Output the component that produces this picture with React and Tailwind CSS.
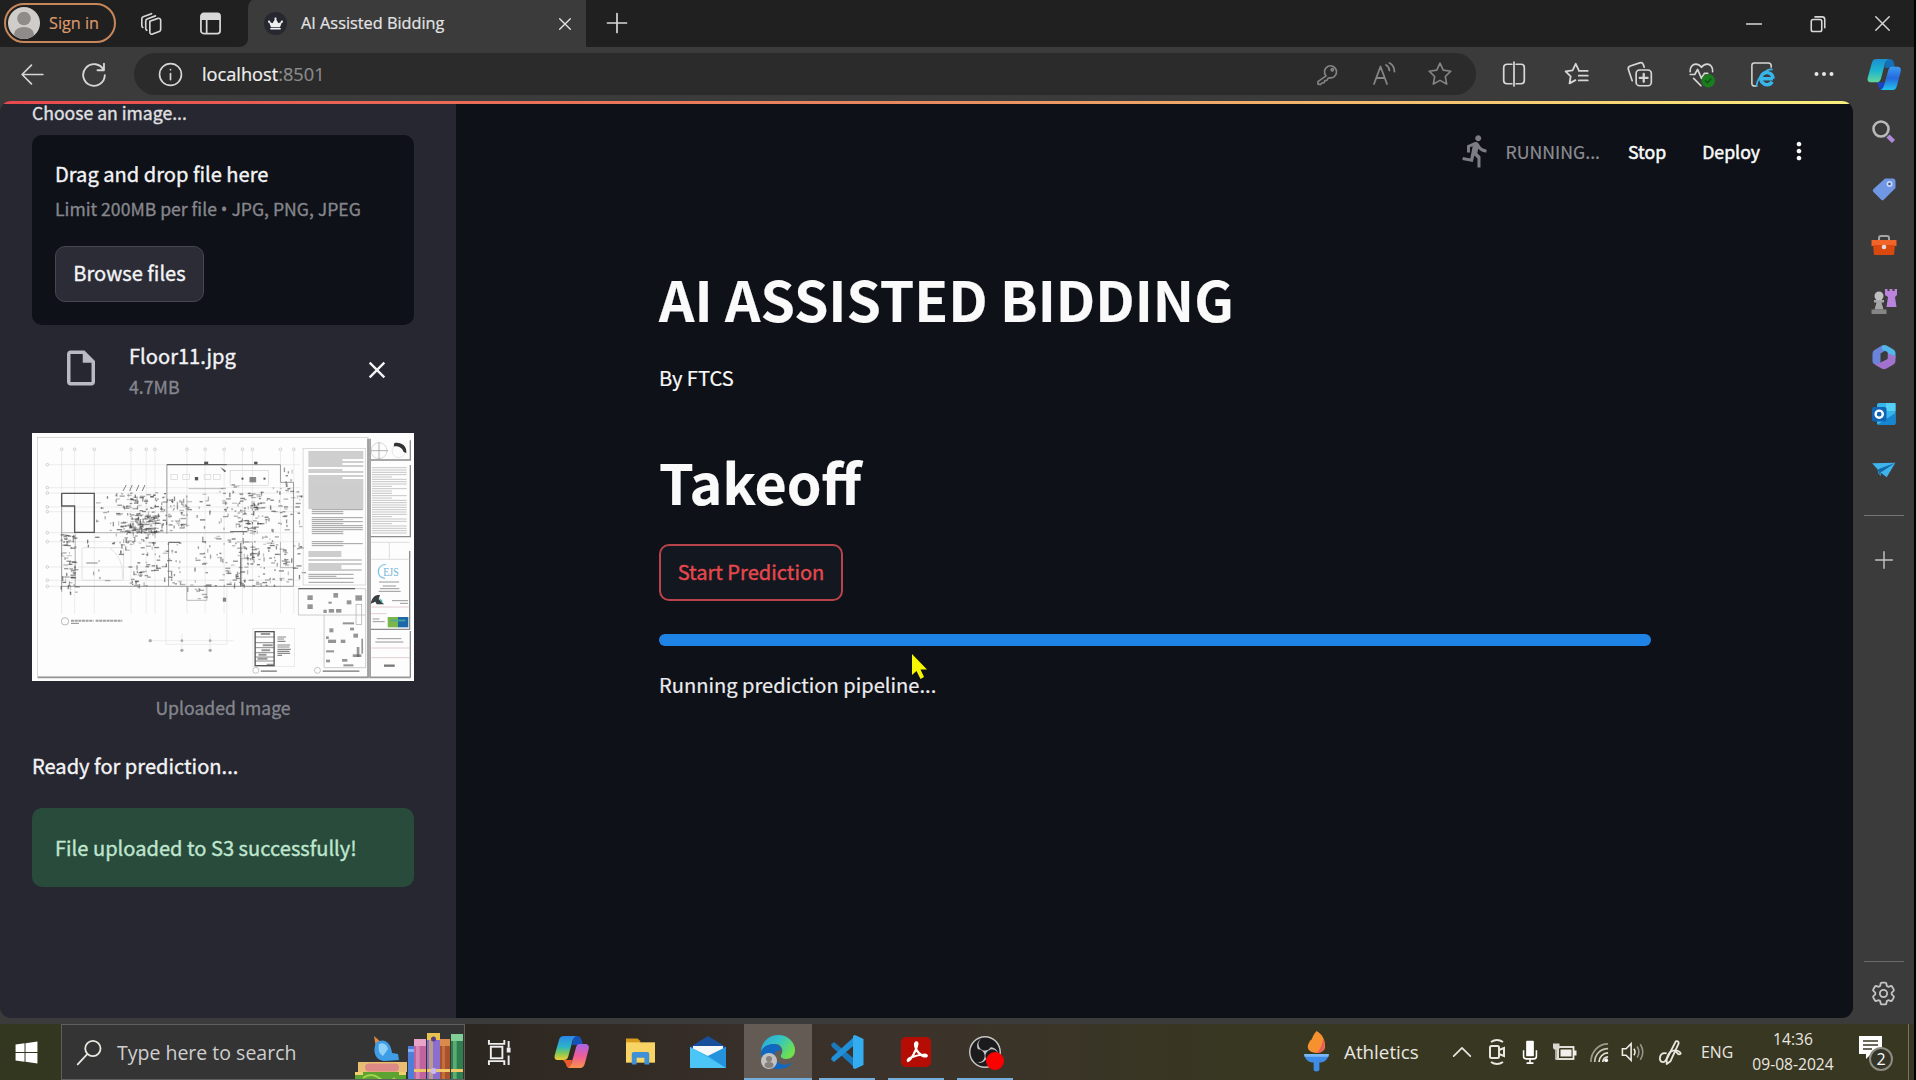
import React from 'react';
import { MdDirectionsRun, MdOutlineInsertDriveFile, MdClose, MdMoreVert } from 'react-icons/md';
import { HiOutlineCog6Tooth } from 'react-icons/hi2';
import { FaWindows, FaCrown } from 'react-icons/fa';
import { SiObsstudio } from 'react-icons/si';

const SANS = "font-['Noto_Sans_CJK_SC','Open_Sans',sans-serif]";
const UI = "font-['Open_Sans','Noto_Sans',sans-serif]";

function Slot({ className = '', children }) {
  return <div className={`flex shrink-0 items-center justify-center ${className}`}>{children}</div>;
}

function Line({ size = 24, w = 1.6, className = '', children }) {
  return (
    <svg
      width={size}
      height={size}
      viewBox="0 0 24 24"
      fill="none"
      stroke="currentColor"
      strokeWidth={w}
      strokeLinecap="round"
      strokeLinejoin="round"
      className={`shrink-0 ${className}`}
    >
      {children}
    </svg>
  );
}

function TitleBar() {
  return (
    <div className="flex h-[47px] shrink-0 items-center bg-[#202020] text-[#d8d8d8]">
      <div className="ml-1 -mt-0.5 flex h-10 w-28 shrink-0 items-center rounded-full border-2 border-[#c8875a] pl-[2px] text-[#dc9a6c]">
        <svg width="32" height="32" viewBox="0 0 32 32">
          <clipPath id="avatar"><circle cx="16" cy="16" r="16" /></clipPath>
          <g clipPath="url(#avatar)">
            <rect width="32" height="32" fill="#cfccc9" />
            <circle cx="16" cy="11.5" r="6.8" fill="#8f8b88" />
            <ellipse cx="16" cy="27" rx="10" ry="7" fill="#8f8b88" />
          </g>
        </svg>
        <span className="ml-[9px] text-[16.2px] leading-6 whitespace-nowrap [-webkit-text-stroke:0.2px]">Sign in</span>
      </div>
      <Slot className="w-[72px]">
        <Line size={26} w={1.5}>
          <path d="M10 9.5 17.5 6.8a1.8 1.8 0 0 1 2.5 1.7v8.6a2 2 0 0 1-1.3 1.9l-6.2 2.3a1.8 1.8 0 0 1-2.5-1.7z" />
          <path d="M7.2 17.8a1.8 1.8 0 0 1-1-1.6V9.2a2 2 0 0 1 1.3-1.9l7.7-2.8" />
          <path d="M3.6 15.2a1.8 1.8 0 0 1-1-1.6V7.2a2 2 0 0 1 1.3-1.9L11.600 2.500" />
        </Line>
      </Slot>
      <Slot className="ml-[-2px] w-[48px]">
        <Line size={23} w={1.8}>
          <rect x="2" y="1.500" width="20" height="21" rx="3" />
          <path d="M3 3h18v4.500H3z" fill="currentColor" />
          <path d="M8 8v14" />
        </Line>
      </Slot>
      <svg width="14" height="47" viewBox="0 0 14 47" className="ml-[4px] shrink-0">
        <path d="M14 0v47H0c6 0 10-3 10-9V9c0-4 1-7 4-9z" fill="#3b3b3b" />
      </svg>
      <div className="flex h-[47px] w-[334px] shrink-0 items-center bg-[#3b3b3b] text-[#e4e4e4]">
        <div className="ml-[12px] flex h-[23px] w-[23px] items-center justify-center rounded-full bg-[#26272f]">
          <FaCrown size={15} color="#f0f0f0" />
        </div>
        <span className="-mt-[2px] ml-[14px] w-[240px] text-[16.3px] leading-6 whitespace-nowrap [-webkit-text-stroke:0.2px]">AI Assisted Bidding</span>
        <Line size={16} w={2} className="ml-[16px]"><path d="M4 4l16 16M20 4L4 20" /></Line>
      </div>
      <svg width="13" height="47" viewBox="0 0 13 47" className="shrink-0 ml-[-10px]">
        <path d="M0 0v47h13c-6 0-9-3-9-9V9C4 5 3 2 0 0z" fill="#3b3b3b" />
      </svg>
      <Slot className="ml-[4px] w-[48px] pb-[1px]">
        <Line size={24} w={1.7}><path d="M12 2.500v19M2.500 12h19" /></Line>
      </Slot>
      <div className="ml-auto flex shrink-0">
        <Slot className="w-16"><Line size={18} w={1.7}><path d="M2 12h20" /></Line></Slot>
        <Slot className="w-16">
          <Line size={18} w={2.100}>
            <rect x="3" y="6" width="14" height="16" rx="2.500" />
            <path d="M8 2.500h9.500c2 0 3.500 1.500 3.500 3.500v11" />
          </Line>
        </Slot>
        <Slot className="w-16"><Line size={17} w={2}><path d="M2.500 2.500l19 19M21.500 2.500l-19 19" /></Line></Slot>
      </div>
    </div>
  );
}

function CopilotBlue() {
  return (
    <svg width="35" height="33" viewBox="0 0 36 34">
      <defs>
        <linearGradient id="cb1" x1="0" y1="0" x2="0" y2="1"><stop offset="0" stopColor="#1b8fd0" /><stop offset=".5" stopColor="#1cb5cf" /><stop offset="1" stopColor="#62d69a" /></linearGradient>
        <linearGradient id="cb2" x1="0" y1="0" x2="0" y2="1"><stop offset="0" stopColor="#3b9bf0" /><stop offset=".5" stopColor="#2569e0" /><stop offset="1" stopColor="#22c3ee" /></linearGradient>
      </defs>
      <path d="M20 1h3c3 0 4 2 5 5l1 4H18z" fill="#1470b8" />
      <path d="M10 25h8l-1 8h-1c-3 0-4-2-4-4z" fill="#1c43c4" />
      <path d="M10 1h12c-2 1-3 3-3.600 5l-4 15c-1 3-2 4-5 4H4c-3 0-4-2-3.200-5L5 5c1-3 2-4 5-4z" fill="url(#cb1)" />
      <path d="M26 9h5c3 0 4.500 2 3.700 5L31 28c-1 3.500-2 5-5 5H14c2-1 3-3 3.600-5l4-14c1-4 2-5 4.400-5z" fill="url(#cb2)" />
    </svg>
  );
}

function ToolBar() {
  return (
    <div className="flex h-[54px] shrink-0 items-center bg-[#3b3b3b] text-[#d6d6d6]">
      <Slot className="w-16"><Line size={25} w={1.6}><path d="M22 12H2M11 3l-9 9 9 9" /></Line></Slot>
      <Slot className="w-[60px]">
        <Line size={26} w={1.7}><path d="M21 8.500A10 10 0 1 0 22 13M21.200 2.500v6h-6" /></Line>
      </Slot>
      <div className="ml-[10px] flex h-[42px] w-[1342px] shrink-0 items-center rounded-full bg-[#2b2b2b]">
        <Slot className="ml-[12px] w-12">
          <Line size={25} w={1.6}><circle cx="12" cy="12" r="10.500" /><path d="M12 11v6M12 7.300v.2" /></Line>
        </Slot>
        <span className="-mt-[1px] ml-[8px] text-[18.2px] leading-6 text-[#f0f0f0] [-webkit-text-stroke:0.2px]">localhost<span className="text-[#8b8b8b]">:8501</span></span>
        <div className="ml-auto mr-[8px] flex text-[#858585]">
          <Slot className="w-[57px]">
            <Line size={23} w={1.700}>
              <path d="M10.500 13.500A6.300 6.300 0 1 1 14.500 15.500L12.500 16l-1 2-2.200.4-.8 2.100-2.300.4L4.500 22.500l-2.500-.5V19.500z" />
              <circle cx="17" cy="7" r="1.200" />
            </Line>
          </Slot>
          <Slot className="w-[56px]">
            <Line size={24} w={1.800}>
              <path d="M2 22 8.500 4.500 15 22M4.200 16h8.600M14 3c2 1 3.200 3 3.400 5.500M17.500 1c3 1.600 4.800 4.500 5 8.500" />
            </Line>
          </Slot>
          <Slot className="w-[56px]">
            <Line size={26} w={1.5}><path d="m12 2 3 6.400 7 1-5.100 4.900 1.300 7-6.200-3.400-6.200 3.400 1.300-7L2 9.400l7-1z" /></Line>
          </Slot>
        </div>
      </div>
      <Slot className="ml-[7px] w-[62px]">
        <Line size={26} w={1.6}><path d="M10 3H5.500A3 3 0 0 0 2.500 6v12a3 3 0 0 0 3 3H10M14 3h4.500a3 3 0 0 1 3 3v12a3 3 0 0 1-3 3H14M12 1v22" /></Line>
      </Slot>
      <Slot className="w-[63px]">
        <Line size={27} w={1.600}><path d="M13.800 7.700 11.300 2.500l-2.800 5.800-6.200.9 4.500 4.400-1 6.300 5.300-2.900M14 8.700h8M14 13h8M14 17.300h8" /></Line>
      </Slot>
      <Slot className="w-[62px]">
        <Line size={27} w={1.500}>
          <path d="M5.500 17.500 2.200 7.800A2.600 2.600 0 0 1 3.800 4.500l8.400-2.800a2.600 2.600 0 0 1 3.200 1.500l.8 2.300" />
          <rect x="9" y="8" width="13.500" height="14" rx="3" /><path d="M15.750 11.500v7M12.200 15h7" strokeWidth="2" />
        </Line>
      </Slot>
      <Slot className="w-[62px]">
        <Line size={27} w={1.5}>
          <path d="M1.900 9.500C1.500 5.500 4 2.800 7 2.800c2.200 0 3.800 1 5 2.800 1.200-1.800 2.800-2.800 5-2.800 3 0 5.300 2.700 4.900 6.700M2 12h4l2.500-4.500 3.500 8 2.500-4.500h3M5 15.500l6.500 6.500" />
          <circle cx="18" cy="17.500" r="6" fill="#1b7d1e" stroke="none" />
          <path d="m15.500 17.500 1.800 1.800 3-3.300" stroke="#0f5212" strokeWidth="1.300" />
        </Line>
      </Slot>
      <Slot className="w-[61px]">
        <svg width="27" height="27" viewBox="0 0 28 28" fill="none">
          <path d="M8 26H5.500A2.500 2.500 0 0 1 3 23.500v-19A2.500 2.500 0 0 1 5.500 2H20a3 3 0 0 1 3 3v2" stroke="#d6d6d6" strokeWidth="1.600" />
          <path d="M24.800 18.300H13.300M24 21.500a6.300 6.300 0 1 1 .9-3.200" stroke="#38b6ec" strokeWidth="3.600" />
          <path d="M9 25.500c-1.500 1-1.500-2.500 1.500-7.500 3-5 9-10.500 14-9" stroke="#38b6ec" strokeWidth="1.800" />
        </svg>
      </Slot>
      <Slot className="w-[62px]">
        <svg width="22" height="6" viewBox="0 0 22 6" fill="#e8e8e8"><circle cx="3.500" cy="3" r="2" /><circle cx="11" cy="3" r="2" /><circle cx="18.500" cy="3" r="2" /></svg>
      </Slot>
      <Slot className="w-[58px]"><CopilotBlue /></Slot>
    </div>
  );
}

function rng(seed) {
  let s = seed;
  return () => {
    s = (s * 1664525 + 1013904223) % 4294967296;
    return s / 4294967296;
  };
}

const CLUSTERS = [
  [285, 222, 60, 110, 12], [345, 215, 120, 125, 120], [460, 215, 50, 125, 34], [512, 225, 50, 100, 40],
  [585, 210, 50, 115, 12], [655, 190, 60, 140, 30], [715, 212, 70, 125, 85], [790, 200, 85, 130, 36],
  [180, 340, 45, 175, 70], [250, 345, 95, 30, 5], [355, 342, 90, 60, 32], [385, 420, 60, 75, 30],
  [450, 365, 90, 130, 40], [580, 340, 50, 170, 18], [640, 345, 80, 150, 44], [720, 345, 110, 150, 84],
  [835, 370, 45, 125, 24], [885, 190, 20, 280, 18], [560, 490, 60, 48, 12], [850, 140, 25, 70, 10],
  [250, 420, 90, 75, 5], [385, 270, 80, 70, 80],
];

function FloorPlan() {
  const r = rng(11);
  const marks = [];
  CLUSTERS.forEach(([x, y, w, h, n]) => {
    for (let i = 0; i < n; i++) {
      const horiz = r() > 0.4;
      marks.push({
        x: x + r() * w,
        y: y + r() * h,
        w: horiz ? 5 + r() * 11 : 4,
        h: horiz ? 4 : 4 + r() * 10,
        o: 0.25 + r() * 0.45,
      });
    }
  });
  const notes = [];
  [[925, 95, 170, 172], [935, 268, 158, 118], [925, 395, 165, 62], [925, 462, 140, 30]].forEach(([x, y, w, h]) => {
    for (let yy = y; yy < y + h; yy += 6) if (r() > 0.16) notes.push([x, yy, w * (r() > 0.3 ? 0.97 : 0.6)]);
  });
  const side = [];
  for (let yy = 142; yy < 345; yy += 7) side.push([1116, yy, r() > 0.3 ? 104 : 60]);
  return (
    <svg viewBox="95 38 1147 744" preserveAspectRatio="none" className="block h-[248px] w-[382px] shrink-0 bg-[#fdfdfd]">
      <rect x="112" y="52" width="992" height="718" fill="none" stroke="#c8c8c8" strokeWidth="2" />
      <path d="M112 771H1104V55M1110 55V771H1232" fill="none" stroke="#979797" strokeWidth="5" />
      <g stroke="#e4e4e4" strokeWidth="2">
        {[184, 223, 282, 392, 438, 464, 560, 615, 672, 727, 757, 841, 881].map((x) => (
          <g key={x}><path d={`M${x} 92V580`} /><circle cx={x} cy="87" r="4" fill="none" stroke="#bbb" /></g>
        ))}
        {[133, 202, 218, 260, 274, 337, 364, 440, 480, 498].map((y) => (
          <g key={y}><path d={`M146 ${y}H900`} /><circle cx="141" cy={y} r="4" fill="none" stroke="#bbb" /></g>
        ))}
        <path d="M497 500V672H680V500M450 661H700M545 640V690M630 640V690" fill="none" />
      </g>
      <g fill="none" stroke="#9a9a9a" strokeWidth="3">
        <path d="M184 219V514M184 498H880V186H841V133H500V340M505 365V498" />
        <path d="M184 337H700M225 340V498M560 540H620V500M560 500V540M710 365H757V415H722V498M841 365V442H880M560 235V320M565 205H670" strokeWidth="2" />
      </g>
      <g fill="none" stroke="#585858" strokeWidth="4"><path d="M184 219H282V336H223V257H184V219" /><path d="M722 368V498M690 334H742M505 366H540M500 133H680" strokeWidth="3" /></g>
      <g fill="none" stroke="#d4d4d4" strokeWidth="2">
        <rect x="245" y="382" width="125" height="98" rx="6" />
        <path d="M330 385c25 15 40 50 36 90" />
        <rect x="512" y="162" width="20" height="16" /><rect x="548" y="162" width="20" height="16" /><rect x="612" y="162" width="20" height="16" /><rect x="640" y="162" width="20" height="16" />
        <rect x="690" y="150" width="115" height="45" />
      </g>
      <g fill="#444">
        {marks.map((m, i) => <rect key={i} x={m.x} y={m.y} width={m.w} height={m.h} opacity={m.o} />)}
      </g>
      <g stroke="#6a6a6a" strokeWidth="2.500" fill="none"><path d="M368 212l10-18M388 212l8-18M408 212l8-18M426 212l8-18" /></g>
      <g fill="#555"><rect x="584" y="170" width="10" height="10" /><rect x="748" y="170" width="20" height="16" opacity=".7" /><rect x="612" y="124" width="12" height="8" /><rect x="762" y="124" width="10" height="8" /><rect x="790" y="172" width="6" height="6" /><rect x="724" y="172" width="6" height="6" /><path d="M660 140l18 12-4 4z" /><rect x="668" y="532" width="10" height="12" opacity=".7" /></g>
      <rect x="909" y="84" width="188" height="410" fill="none" stroke="#cdcdcd" strokeWidth="2" />
      <g stroke="#777" strokeWidth="3">{notes.map(([x, y, w], i) => <path key={i} d={`M${x} ${y}h${w}`} opacity=".7" />)}</g>
      <g stroke="#a5a5a5" strokeWidth="2.500">{side.map(([x, y, w], i) => <path key={i} d={`M${x} ${y}h${w}`} opacity=".75" />)}</g>
      <g fill="none" stroke="#8c8c8c" strokeWidth="3">
        <path d="M1112 119H1231V60M1112 349H1231V134M1229 392V627H1112M1231 632V771" strokeWidth="4" />
        <circle cx="1137" cy="91" r="24" stroke="#c4c4c4" strokeWidth="2" /><path d="M1112 91H1164M1137 66V116" strokeWidth="2" />
        <circle cx="1196" cy="92" r="20" stroke="#dadada" strokeWidth="2" />
        <path d="M1114 366H1229M1168 366V415M1114 417H1229" stroke="#cfcfcf" strokeWidth="2" />
        <path d="M1114 560H1229M1114 580H1160M1114 683H1229M1114 712H1229" stroke="#d8b9bb" strokeWidth="2" />
      </g>
      <path d="M1183 68c18-4 38 6 36 30l-8-3c-4-12-14-18-30-17z" fill="#333" />
      <path d="M1157 432c-28 2-30 40-2 42" fill="none" stroke="#7fc3e4" strokeWidth="4" />
      <text x="1150" y="468" fontSize="35" fill="#6fb4d6" textLength="46" lengthAdjust="spacingAndGlyphs" className="font-['Liberation_Serif',serif]">EJS</text>
      <g stroke="#777" strokeWidth="3"><path d="M1137 485h60M1148 497h40M1140 505h58M1136 513h66M1176 541h48M1200 549h24M1118 604h36M1118 596h20M1130 655h74M1126 665h84" opacity=".75" /><path d="M1152 736h32" strokeWidth="7" /></g>
      <path d="M1112 550c4-22 16-28 28-26l-4 12 16 16h-22l-4-8z" fill="#3b3f42" /><path d="M1138 532l10 10-4 6z" fill="#38bdb4" />
      <rect x="1163" y="590" width="33" height="31" fill="#7ab648" /><rect x="1194" y="590" width="31" height="31" fill="#1c68a8" /><path d="M1172 598h44v5h-44z" fill="#4aa7a0" />
      <g fill="none" stroke="#b5b5b5" strokeWidth="2"><path d="M895 505H1097V742H972V584H895zM972 584H1097" /><rect x="758" y="624" width="125" height="115" stroke="#e2e2e2" /></g>
      <path d="M895 505H1065" stroke="#666" strokeWidth="4" />
      <g fill="#555">
        {[[922, 525, 16, 14], [922, 552, 16, 14], [1000, 518, 14, 14], [985, 544, 10, 6], [1040, 540, 14, 12], [1066, 525, 20, 16], [970, 568, 10, 10], [986, 566, 16, 11], [1008, 566, 16, 11], [1028, 606, 34, 6], [988, 624, 12, 12], [1050, 622, 12, 8], [978, 648, 8, 8], [984, 658, 24, 10], [1022, 658, 14, 10], [978, 690, 24, 6], [1070, 680, 8, 30], [1058, 702, 26, 8], [978, 718, 12, 8], [1026, 716, 16, 8], [1084, 655, 5, 45], [1030, 732, 30, 6], [968, 750, 110, 5], [782, 750, 48, 5], [1060, 640, 14, 12]].map(([x, y, w, h], i) => (
          <rect key={i} x={x} y={y} width={w} height={h} opacity=".62" />
        ))}
      </g>
      <rect x="1068" y="552" width="17" height="60" fill="none" stroke="#aaa" strokeWidth="2" />
      <g stroke="#555" fill="none"><rect x="765" y="634" width="57" height="102" strokeWidth="4" /><path d="M765 650H822M765 667H822M765 682H822M765 697H822M765 710H822M765 722H822" strokeWidth="2" /><path d="M782 641h28M788 675h30M775 703h24M772 715h30M800 733h20M784 690h26" strokeWidth="6" opacity=".6" /><path d="M832 650h26M832 656h20M832 663h24M832 674h38M832 680h36M832 687h40M832 693h36M832 699h38M832 705h14" strokeWidth="3.500" opacity=".7" /></g>
      <circle cx="194" cy="603" r="11" fill="none" stroke="#999" strokeWidth="2" /><circle cx="767" cy="750" r="9" fill="none" stroke="#aaa" strokeWidth="2" /><circle cx="952" cy="750" r="9" fill="none" stroke="#aaa" strokeWidth="2" />
      <path d="M212 601h68M286 601h80" stroke="#8a8a8a" strokeWidth="6" strokeDasharray="9 2" opacity=".8" />
      <path d="M212 609h24M258 428h34" stroke="#888" strokeWidth="3" />
      <g fill="#aaa"><circle cx="450" cy="661" r="5" /><circle cx="545" cy="661" r="4" /><circle cx="630" cy="661" r="4" /><circle cx="545" cy="690" r="5" /><circle cx="630" cy="690" r="5" /></g>
    </svg>
  );
}

function Sidebar() {
  return (
    <aside className="flex w-[456px] shrink-0 flex-col bg-[#262730] pl-8 text-[#f4f4f6] [-webkit-text-stroke:0.35px]">
      <p className="h-6 text-[17.6px] leading-6 text-[#e0e0e4]">Choose an image...</p>
      <div className="mt-[10px] flex h-[190px] w-[382px] flex-col items-start rounded-[10px] bg-[#0e1117] pt-[24px] pl-[23px]">
        <p className="h-[30px] text-[20.1px] leading-[30px]">Drag and drop file here</p>
        <p className="mt-[8px] h-6 text-[17.6px] leading-6 whitespace-nowrap text-[#85868c]">
          Limit 200MB per file <span className="font-['Open_Sans']">•</span> JPG, PNG, JPEG
        </p>
        <button className="mt-[25px] flex h-[56px] w-[149px] items-center justify-center rounded-[10px] border border-[#46474f] bg-[#2b2c36] pb-[2px] text-[20.1px] leading-[30px]">
          Browse files
        </button>
      </div>
      <div className="flex h-[108px] w-[382px] items-start pt-[16px]">
        <MdOutlineInsertDriveFile size={42} className="mt-[6px] ml-[28px] shrink-0 text-[#b9bac6]" />
        <div className="ml-[27px] flex flex-col">
          <span className="text-[20.1px] leading-[30px]">Floor11.jpg</span>
          <span className="mt-[3px] text-[17.7px] leading-6 text-[#85868d]">4.7MB</span>
        </div>
        <MdClose size={28} className="mt-[15px] mr-[23px] ml-auto" />
      </div>
      <FloorPlan />
      <p className="mt-[15px] h-6 w-[382px] text-center text-[17.6px] leading-6 text-[#85868d]">Uploaded Image</p>
      <p className="mt-[31px] h-[30px] text-[20.1px] leading-[30px]">Ready for prediction...</p>
      <div className="mt-[27px] flex h-[79px] w-[382px] items-center rounded-[10px] bg-[#294b3c] pl-[23px] text-[20.1px] leading-[30px] text-[#bfe6cf]">
        File uploaded to S3 successfully!
      </div>
    </aside>
  );
}

function Main() {
  return (
    <main className="flex flex-1 flex-col bg-[#0e1117] text-[#fafafa] [-webkit-text-stroke:0.2px]">
      <header className="flex h-[100px] items-center justify-end pr-[40px] text-[17.7px] leading-6">
        <MdDirectionsRun size={36} className="text-[#7c7d83]" />
        <span className="ml-[12px] text-[#8b8c93]">RUNNING...</span>
        <span className="ml-[28px] [-webkit-text-stroke:0.5px]">Stop</span>
        <span className="ml-[36px] [-webkit-text-stroke:0.5px]">Deploy</span>
        <MdMoreVert size={28} className="ml-[25px]" />
      </header>
      <div className="ml-[203px] flex w-[992px] flex-col items-start">
        <h1 className="mt-[62px] h-[70px] text-[55.2px] leading-[70px] font-bold whitespace-nowrap">AI ASSISTED BIDDING</h1>
        <p className="mt-[30px] h-[30px] text-[20.1px] leading-[30px]">By FTCS</p>
        <h1 className="mt-[53px] h-[70px] text-[55.6px] leading-[70px] font-bold">Takeoff</h1>
        <button className="mt-[28px] flex h-[57px] w-[184px] items-center justify-center rounded-[10px] border-2 border-[#b9434a] bg-[#13171f] pb-[2px] text-[20.1px] leading-[30px] text-[#e5484d] [-webkit-text-stroke:0.4px]">
          Start Prediction
        </button>
        <div className="mt-[33px] h-[12px] w-full rounded-full bg-[#1f83e6]" />
        <div className="relative mt-[24px]">
          <p className="h-[30px] text-[20.1px] leading-[30px] text-[#ececee]">Running prediction pipeline...</p>
          <svg width="17" height="26" viewBox="0 0 17 26" className="absolute -top-[17px] left-[252px]">
            <path d="M1 1v21l4.500-4 4 8 3.500-2-3.500-7.500H16z" fill="#f7f700" />
          </svg>
        </div>
      </div>
    </main>
  );
}

function EdgeRail() {
  return (
    <nav className="flex w-[61px] shrink-0 flex-col items-center bg-[#3b3b3b] text-[#c4c4c4]">
      <Slot className="mt-[2px] h-[57px]">
        <svg width="26" height="26" viewBox="0 0 26 26"><circle cx="10" cy="10" r="7.500" fill="none" stroke="#b9b9b9" strokeWidth="2.600" /><path d="m17 17 5.500 5.500" stroke="#b088d8" strokeWidth="4.500" /></svg>
      </Slot>
      <Slot className="h-[57px]">
        <svg width="26" height="26" viewBox="0 0 26 26"><path d="M14 2.500h7.500a3 3 0 0 1 3 3V12l-11.500 11.500a2 2 0 0 1-3 0L2.500 16a2 2 0 0 1 0-3z" fill="#6f97e4" /><circle cx="18.500" cy="8" r="3" fill="#c9daf8" /><circle cx="18.500" cy="8" r="1.300" fill="#44548c" /></svg>
      </Slot>
      <Slot className="h-[56px]">
        <svg width="28" height="26" viewBox="0 0 28 26"><path d="M9 9V6q0-2 2-2h6q2 0 2 2v3" fill="none" stroke="#a5a5a5" strokeWidth="2" /><path d="M1.500 8h25v6h-25z" fill="#f2652a" /><path d="M3 13h22l-1 10H4z" fill="#d9480f" /><circle cx="14" cy="15" r="2.300" fill="#e0dcd8" /></svg>
      </Slot>
      <Slot className="h-[55px]">
        <svg width="28" height="28" viewBox="0 0 28 28"><circle cx="9" cy="9" r="4.500" fill="#c0c0c0" /><path d="M4 13h10v2.500h-2.500l2 7h-9l2-7H4z" fill="#a6a6a6" /><path d="M1.500 22.500h15V27h-15z" fill="#858585" /><path d="M15 2h2.500v2h2V2h3v2h2V2H27v6l-2 2 1.500 10h-10L18 10l-3-2z" fill="#bb84dc" /></svg>
      </Slot>
      <Slot className="h-[57px]">
        <svg width="26" height="26" viewBox="0 0 26 26"><path d="M11 1.500 3.500 6A4 4 0 0 0 1.500 9.500v8c0 2 2 3.500 5 2.500l3-1.500V9.500L17 5z" fill="#6a84dc" /><path d="M11 1.500c2-1 3.500-.7 5 .2L22.500 5.500a4 4 0 0 1 2 3.500v5l-8-4.500V8L11 5.500z" fill="#53b6e8" /><path d="M24.500 12v5a4 4 0 0 1-2 3.500l-7 4a4.500 4.500 0 0 1-5 0L3.500 20.500l6-2 7-4V9.500z" fill="#a272cf" /><path d="m10 10 6.500-1v6L10 18z" fill="#3b3b3b" /></svg>
      </Slot>
      <Slot className="h-[57px]">
        <svg width="26" height="26" viewBox="0 0 26 26"><rect x="6" y="2" width="18.500" height="22" rx="2" fill="#35b5ea" /><path d="M15 2h9.500v8H15z" fill="#55d0f5" /><path d="M6 24 24.500 12v10a2 2 0 0 1-2 2z" fill="#1785cf" /><rect x="1" y="6" width="14.500" height="14.500" rx="2" fill="#0f64b4" /><circle cx="8.200" cy="13.200" r="3.600" fill="none" stroke="#fff" strokeWidth="2.400" /></svg>
      </Slot>
      <Slot className="h-[55px]">
        <svg width="26" height="20" viewBox="0 0 28 22"><path d="M1 3.500 26.500 3 17 19l-6.500-5v3.500L8 15l-1-4.500z" fill="#3fb4ec" /><path d="M7 10.500 26.500 3 10 14v4.500z" fill="#1568a8" /></svg>
      </Slot>
      <div className="mt-[18px] h-px w-10 bg-[#757575]" />
      <Slot className="mt-[16px] h-[56px]"><Line size={20} w={1.7}><path d="M12 2v20M2 12h20" /></Line></Slot>
      <div className="mt-auto h-px w-10 bg-[#6a6a6a]" />
      <Slot className="-mb-[6px] h-[62px]"><HiOutlineCog6Tooth size={29} /></Slot>
    </nav>
  );
}

function SearchArt() {
  const books = [[57, 19, 11, '#c2649c', '#e8a4c8'], [70, 13, 12, '#8a6ed0', '#e9c14e'], [83, 19, 9, '#a9512c', '#d98b4b'], [94, 14, 11, '#2f7f4e', '#7fcf96']];
  return (
    <svg width="109" height="54" viewBox="0 0 109 54" className="shrink-0">
      <rect x="53" y="21" width="6" height="33" fill="#4b7fda" /><rect x="53" y="24" width="6" height="3" fill="#8db2f0" />
      {books.map(([x, y, w, a, b]) => (
        <g key={x} transform="translate(2 -5)">
          <rect x={x} y={y} width={w + 1} height="60" rx="1" fill={a} />
          <rect x={x + 2} y={y} width={w / 3} height="60" fill={b} opacity=".55" />
          <rect x={x} y={y} width={w + 1} height="7" fill={b} />
          <rect x={x} y="49" width={w + 1} height="3" fill="#efc766" />
        </g>
      ))}
      <circle cx="78.500" cy="14" r="2.500" fill="#5a3d86" /><circle cx="78.500" cy="46" r="3" fill="#cdb9ef" />
      <path d="M3 37h49v10H3z" fill="#e9bd72" /><rect x="10" y="38.500" width="34" height="8" rx="4" fill="#dd8a86" />
      <path d="M0 47h51v8H0z" fill="#5da331" /><path d="M0 48.500h8M44 48.500h7" stroke="#f1cf6e" strokeWidth="3" /><path d="M8 53q8-6 16 0t16 0" fill="none" stroke="#9ed34a" strokeWidth="2" />
      <path d="M19 11l8 7-6 5z" fill="#e08a3c" />
      <path d="M21 18c8-6 15 0 16 10l6 1 1 6-14 1c-9 0-13-9-9-18z" fill="#3f9de6" /><path d="M24 19c4-2 8 0 9 5l-5 7c-4-2-5-7-4-12z" fill="#8fd0f7" />
    </svg>
  );
}

function CopilotColor() {
  return (
    <svg width="36" height="34" viewBox="0 0 36 34">
      <defs>
        <linearGradient id="cc1" x1="0" y1="0" x2="0" y2="1"><stop offset="0" stopColor="#2a86e8" /><stop offset=".45" stopColor="#2bb5c8" /><stop offset=".7" stopColor="#7cc75a" /><stop offset="1" stopColor="#f0cc35" /></linearGradient>
        <linearGradient id="cc2" x1="0" y1="0" x2="0" y2="1"><stop offset="0" stopColor="#a765e8" /><stop offset=".5" stopColor="#ef5c9a" /><stop offset="1" stopColor="#f7924a" /></linearGradient>
      </defs>
      <path d="M20 1h3c3 0 4 2 5 5l1 4H18z" fill="#1552b8" />
      <path d="M9 25h9l-1 8h-1c-3 0-4-2-4-4z" fill="#e8592e" />
      <path d="M10 1h12c-2 1-3 3-3.600 5l-4 15c-1 3-2 4-5 4H4c-3 0-4-2-3.200-5L5 5c1-3 2-4 5-4z" fill="url(#cc1)" />
      <path d="M26 9h5c3 0 4.500 2 3.700 5L31 28c-1 3.500-2 5-5 5H14c2-1 3-3 3.600-5l4-14c1-4 2-5 4.400-5z" fill="url(#cc2)" />
    </svg>
  );
}

function TaskApp({ className, bar, children }) {
  return (
    <div className={`flex h-14 shrink-0 flex-col items-center ${className}`}>
      <div className="flex flex-1 items-center pt-[2px]">{children}</div>
      <div className={`h-[2px] bg-[#76aedb] ${bar}`} />
    </div>
  );
}

function TaskBar() {
  return (
    <div className="flex h-14 shrink-0 items-center bg-[#34371f] text-[#e9e7e0]">
      <Slot className="w-[61px]"><FaWindows size={25} color="#fff" className="ml-[-9px]" /></Slot>
      <div className="flex h-14 w-[404px] shrink-0 items-end border border-[#5e5e5e] bg-[#343434]">
        <Slot className="ml-[9px] h-full w-[36px]">
          <Line size={27} w={1.600}><circle cx="15" cy="8.500" r="6.800" /><path d="m10 13.500-8.500 9" /></Line>
        </Slot>
        <span className="ml-[10px] h-full w-[236px] text-[19.500px] leading-[56px] whitespace-nowrap text-[#cfcfcf]">Type here to search</span>
        <div className="ml-[3px]"><SearchArt /></div>
      </div>
      <div className="flex h-14 flex-1 items-center bg-linear-to-r from-[#2c2720] via-[#3c322c] via-[28%] to-[#383722] to-[52%]">
        <Slot className="w-[69px]">
          <svg width="25" height="27" viewBox="0 0 26 28" fill="none" stroke="#eee" strokeWidth="2"><rect x="4" y="8" width="12" height="12" /><path d="M2 1v4h16V1M2 27v-4h16v4M22.500 2v7M22.500 17v10" /><path d="M20.500 9h4v5h-4z" fill="#eee" stroke="none" /></svg>
        </Slot>
        <Slot className="w-[75px]"><CopilotColor /></Slot>
        <Slot className="w-[62px]">
          <svg width="31" height="31" viewBox="0 0 32 31"><path d="M1 1h12l3 3-2 4H1z" fill="#d99a1c" /><path d="M1 5h30v21H1z" fill="#f8d465" /><path d="M7 17q0-2 2-2h14q2 0 2 2v11h-5v-7h-8v7H7z" fill="#3f90d6" /></svg>
        </Slot>
        <Slot className="w-[73px]">
          <svg width="36" height="34" viewBox="0 0 36 34"><path d="M0 12 18 1l18 11v6H0z" fill="#174f9c" /><path d="M3 11h30v10H3z" fill="#f4f6f8" /><path d="M0 12l18 9L36 12v21H0z" fill="#35b4ee" /><path d="M0 12v21h36z" fill="#4cc6f6" /><path d="M18 21 36 12v21z" fill="#2593dc" /></svg>
        </Slot>
        <TaskApp className="w-[68px] bg-[#645b55]" bar="w-full">
          <svg width="36" height="36" viewBox="0 0 36 36">
            <defs><linearGradient id="eg" x1="0" y1="0" x2="1" y2=".5"><stop offset="0" stopColor="#2aa5e0" /><stop offset=".55" stopColor="#35c6c0" /><stop offset="1" stopColor="#6fe04e" /></linearGradient></defs>
            <path d="M1 18C1 8 9 1 18 1c11 0 17 8 17 15 0 6-4 9-9 9-4 0-6-2-5-4 3-4 1-11-6-11C8 10 2 14 1 18z" fill="url(#eg)" />
            <path d="M1 18c2-6 8-8 13-8 4 0 7 3 7 7-5-2-9 4-5 9 4 6 12 6 16 2-2 5-8 7-14 7C8 35 1 28 1 18z" fill="#1268c0" />
            <circle cx="9" cy="27" r="8" fill="#c4c2c0" /><circle cx="9" cy="25" r="3" fill="#88827e" /><ellipse cx="9" cy="31" rx="4.500" ry="3" fill="#88827e" />
          </svg>
        </TaskApp>
        <TaskApp className="w-[70px]" bar="w-[56px]">
          <svg width="36" height="36" viewBox="0 0 36 36"><path d="M2 10.500 5 8l21 17.500V34L3 13z" fill="#1b78bd" /><path d="M2 25.500 5 28l21-17.500V2L3 23z" fill="#2091d8" /><path d="M26 1l8.500 4v26L26 35l-2-1V2z" fill="#33adf0" /></svg>
        </TaskApp>
        <TaskApp className="w-[68px]" bar="w-[56px]">
          <svg width="32" height="32" viewBox="0 0 32 32"><rect x="1" y="1" width="30" height="30" rx="5" fill="#b50d04" /><path d="M8 25c-2-2 6-6 17-6.500 2 0 2.500 2 .5 2-4 0-10-5-10.500-12 0-3 3-2.500 2.300 0C16.500 14 11 24 8 25z" fill="none" stroke="#fff" strokeWidth="2.200" /></svg>
        </TaskApp>
        <TaskApp className="w-[69px]" bar="w-[56px]">
          <div className="relative">
            <div className="flex h-[32px] w-[32px] items-center justify-center rounded-full bg-[#1b1a1c] text-[#c9c7c6]"><SiObsstudio size={32} /></div>
            <div className="absolute -right-[3px] -bottom-[2px] h-[18px] w-[18px] rounded-full bg-[#fb0202]" />
          </div>
        </TaskApp>
        <div className="ml-auto flex h-full items-center">
          <svg width="25" height="42" viewBox="0 0 26 44"><path d="M13 0c6 3 9 9 9 16 0 4-3 7-9 7S3 20 4 15c1-3 2-3 2-5 2 1 3-6 7-10z" fill="#f6912f" /><path d="M20 8c3 6 2 15-7 15 4-4 6-8 7-15z" fill="#ee5a5f" /><path d="M0 24h26c-1 6-5 9-10 9v8q-3 3-6 0v-8C5 33 1 30 0 24z" fill="#3f8be8" /><path d="M0 24h26l-.5 3H.5z" fill="#7ab8f5" /></svg>
          <span className="ml-[15px] w-[99px] text-[18.8px] leading-6">Athletics</span>
          <Slot className="w-[38px]"><Line size={20} w={2}><path d="M2 17 12 7l10 10" /></Line></Slot>
          <Slot className="w-[32px]">
            <svg width="18" height="28" viewBox="0 0 18 28" fill="none" stroke="#e9e7e0" strokeWidth="2"><rect x="2" y="8" width="9" height="12" rx="1.500" /><path d="M11 12l5-2v8l-5-2M3 4q6-4 12 0M3 24q6 4 12 0" /></svg>
          </Slot>
          <Slot className="w-[33px]">
            <svg width="18" height="24" viewBox="0 0 18 28"><rect x="4.500" y="1" width="9" height="18" rx="1" fill="#fff" /><path d="M1.500 12v7q0 3 3 3h9q3 0 3-3v-7M9 22v4M5 27h8" fill="none" stroke="#fff" strokeWidth="1.800" /></svg>
          </Slot>
          <Slot className="w-[36px]">
            <svg width="25" height="20" viewBox="0 0 25 20"><rect x="6" y="5" width="15.500" height="12" fill="none" stroke="#f2f0ea" strokeWidth="1.800" /><path d="M8.500 7.500h11v7h-11z" fill="#f2f0ea" /><path d="M22 8.500h2.500v5H22z" fill="#f2f0ea" /><path d="M1 1.500h6.500v4.500q0 2-3 2t-3.500-2z" fill="#d8d6ce" /><path d="M4 8v9h3" fill="none" stroke="#d8d6ce" strokeWidth="1.500" /></svg>
          </Slot>
          <Slot className="w-[34px]">
            <svg width="21" height="21" viewBox="0 0 22 22" fill="none" strokeWidth="1.800"><path d="M2 21C2 10 10 2 20 2" stroke="#9b998c" /><path d="M6 21C6 13 12 7 20 7" stroke="#c6c4b8" /><path d="M10.500 21c0-5 4-9.500 9.500-9.500M14.500 21c0-3 2-5.500 5.500-5.500" stroke="#e6e4da" /><circle cx="18" cy="19" r="2" fill="#fff" /></svg>
          </Slot>
          <Slot className="w-[32px]">
            <svg width="25" height="22" viewBox="0 0 26 24" fill="none" strokeWidth="1.700"><path d="M2 8.500h4L11.500 3v18L6 15.500H2z" stroke="#efede6" /><path d="M14.500 8.500q2.500 3.500 0 7" stroke="#efede6" /><path d="M18 6q4 6 0 12M21.500 3.500q5.500 8.500 0 17" stroke="#98968a" /></svg>
          </Slot>
          <Slot className="w-[45px]">
            <svg width="25" height="27" viewBox="0 0 26 28" fill="none" stroke="#e9e7e0" strokeWidth="1.900" strokeLinejoin="round"><path d="M18.500 2.500q3-1 3 2L13 23l-4 3v-5z" /><path d="M9 15c-8-2-9 9-4 9 6 0 3-11 11-12 6-1 10 4 6 4-2 0-2-3-5-4" /></svg>
          </Slot>
          <span className="ml-[8px] w-[51px] text-[15.8px] leading-6">ENG</span>
          <div className="flex w-[82px] flex-col items-center text-[15.600px] leading-[25px] whitespace-nowrap">
            <span>14:36</span>
            <span>09-08-2024</span>
          </div>
          <div className="relative ml-[24px] h-[40px] w-[36px]">
            <svg width="26" height="26" viewBox="0 0 26 26" className="mt-[3px]"><path d="M1 1h23v18H13l-5 5v-5H1z" fill="#fff" /><path d="M5 6h15M5 10h15M5 14h9" stroke="#3b3a25" strokeWidth="1.500" /></svg>
            <div className="absolute top-[15px] left-[11px] flex h-6 w-6 items-center justify-center rounded-full border-2 border-[#8d8c80] bg-[#36352a] text-[16px] leading-none text-white">2</div>
          </div>
          <div className="ml-[14px] h-14 w-px bg-[#77756a]" />
          <div className="w-[5px]" />
        </div>
      </div>
    </div>
  );
}

export default function App() {
  return (
    <div className={`flex h-[1080px] w-[1916px] overflow-hidden bg-black ${UI}`}>
      <div className="flex w-[1914px] shrink-0 flex-col">
        <TitleBar />
        <ToolBar />
        <div className="flex h-[917px] shrink-0 bg-[#3b3b3b]">
          <div className={`relative flex w-[1853px] shrink-0 overflow-hidden rounded-[11px] ${SANS}`}>
            <Sidebar />
            <Main />
            <div className="absolute inset-x-0 top-0 h-[3px] bg-linear-to-r from-[#e9484f] via-[#e88a5f] to-[#f9f07e]" />
          </div>
          <EdgeRail />
        </div>
        <div className="h-[6px] shrink-0 bg-[#3b3b3b]" />
        <TaskBar />
      </div>
    </div>
  );
}
